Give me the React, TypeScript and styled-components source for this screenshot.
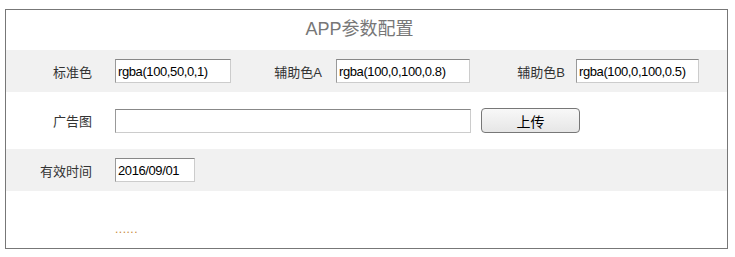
import styled, { createGlobalStyle } from "styled-components";

const GlobalStyle = createGlobalStyle`
	body {
		margin: 0;
		background: #fff;
		font-family: Arial, "Liberation Sans", "Noto Sans CJK SC", sans-serif;
	}
`;

const Page = styled.div`
	padding: 9px 7px 0 5px;
`;

const Panel = styled.div`
	border: 1px solid #777;
	height: 238px;
	display: flex;
	flex-direction: column;
`;

const Title = styled.h2`
	margin: 0;
	height: 40px;
	line-height: 38px;
	padding-right: 14px;
	text-align: center;
	font-size: 18px;
	font-weight: normal;
	color: #777;
`;

const Row = styled.div<{ $shade?: boolean; $h: number }>`
	display: grid;
	grid-template-columns: 109px 130px 91px 145px 95px 1fr;
	align-items: center;
	height: ${(p) => p.$h}px;
	background: ${(p) => (p.$shade ? "#f1f1f1" : "#fff")};
`;

const Label = styled.label<{ $pad: number }>`
	text-align: right;
	padding-right: ${(p) => p.$pad}px;
	font-size: 13px;
	color: #333;
`;

const Field = styled.input<{ $w: number; $span?: number }>`
	box-sizing: border-box;
	width: ${(p) => p.$w}px;
	height: 24px;
	padding: 1px 2px;
	grid-column: span ${(p) => p.$span || 1};
	font-family: Arial, "Liberation Sans", sans-serif;
	font-size: 13px;
	letter-spacing: -0.4px;
	color: #000;
	background: #fff;
	border: 1px solid #ccc;
	border-top-color: #888;
	border-left-color: #999;
	outline: none;
`;

const UploadButton = styled.button`
	box-sizing: border-box;
	width: 99px;
	height: 25px;
	border: 1px solid #777;
	border-radius: 4px;
	background: linear-gradient(#f8f8f8, #e6e6e6);
	font-size: 14px;
	color: #000;
	font-family: "Noto Sans CJK SC", sans-serif;
`;

const Dots = styled.span`
	grid-column: 2;
	align-self: end;
	padding-bottom: 12px;
	font-size: 12px;
	letter-spacing: 0.5px;
	color: #c98a3a;
`;

export default function App() {
  return (
    <Page>
      <GlobalStyle />
      <Panel>
        <Title>APP参数配置</Title>
        <Row $shade $h={42}>
          <Label $pad={23}>标准色</Label>
          <Field $w={116} defaultValue="rgba(100,50,0,1)" />
          <Label $pad={14}>辅助色A</Label>
          <Field $w={134} defaultValue="rgba(100,0,100,0.8)" />
          <Label $pad={11}>辅助色B</Label>
          <Field $w={123} defaultValue="rgba(100,0,100,0.5)" />
        </Row>
        <Row $h={57}>
          <Label $pad={23}>广告图</Label>
          <Field $w={356} $span={3} defaultValue="" />
          <div>
            <UploadButton>上传</UploadButton>
          </div>
        </Row>
        <Row $shade $h={42}>
          <Label $pad={23}>有效时间</Label>
          <Field $w={80} defaultValue="2016/09/01" />
        </Row>
        <Row $h={57}>
          <Dots>......</Dots>
        </Row>
      </Panel>
    </Page>
  );
}
